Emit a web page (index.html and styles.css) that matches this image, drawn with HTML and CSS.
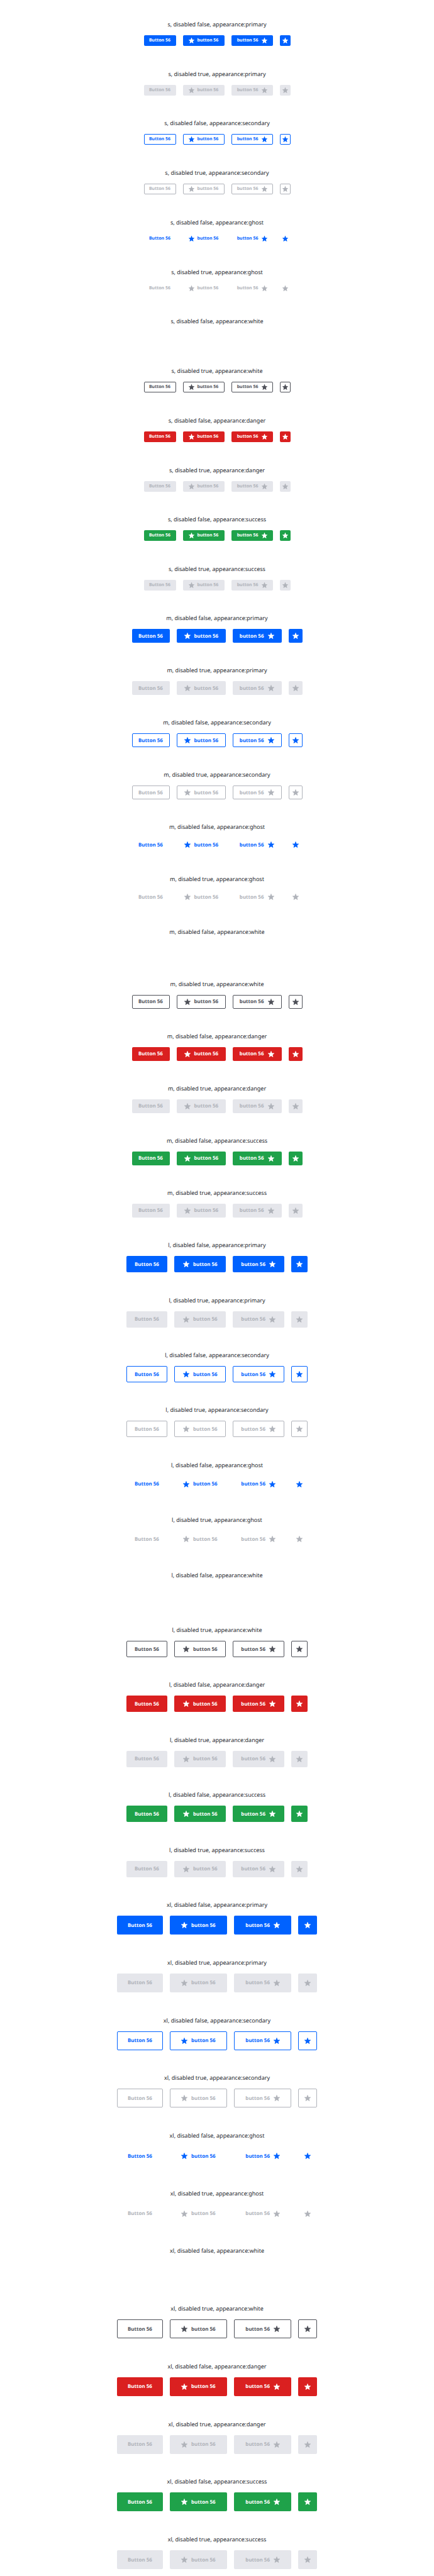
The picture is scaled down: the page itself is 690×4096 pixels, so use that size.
FILE: index.html
```html
<!DOCTYPE html>
<html lang="en">
<head>
<meta charset="utf-8">
<title>Buttons</title>
<link rel="stylesheet" href="styles.css">
</head>
<body>
<main class="page" id="page"></main>
<script src="buttons.js"></script>
</body>
</html>
```

FILE: styles.css
```css
* {
  box-sizing: border-box;
}

body {
  margin: 0;
  background: #fff;
  color: #22252b;
  font-family: "Noto Sans", "Open Sans", sans-serif;
  text-rendering: geometricPrecision;
}

.page {
  display: grid;
  grid-template-rows: 146fr 154fr 162fr 170fr;
  min-height: 100vh;
  padding-top: 5px;
}

.group {
  display: grid;
  grid-auto-rows: 1fr;
}

.variant {
  display: flex;
  flex-direction: column;
  justify-content: flex-end;
  align-items: center;
  padding-bottom: 11px;
}

.title {
  margin: 0 0 11px;
  font-size: 9px;
  font-weight: 400;
  line-height: 13px;
}

.row {
  display: flex;
  gap: 11px;
}

.btn {
  display: flex;
  align-items: center;
  justify-content: center;
  padding: 0;
  border: 1px solid transparent;
  border-radius: 2px;
  font-family: inherit;
  font-weight: 700;
  text-rendering: inherit;
  white-space: nowrap;
}

.star {
  flex: none;
  fill: currentColor;
}

.lead {
  justify-content: flex-start;
}

.trail {
  justify-content: flex-end;
}

/* Sizes */
.s .btn { height: 17px; width: 51px; font-size: 7px; gap: 5px; }
.s .lead, .s .trail { width: 66px; }
.s .lead { padding-left: 8px; }
.s .trail { padding-right: 8px; }
.s .icon { width: 17px; }
.s .star { width: 9px; height: 9px; }

.m .btn { height: 22px; width: 60px; font-size: 8px; gap: 6px; }
.m .lead, .m .trail { width: 78px; }
.m .lead { padding-left: 11px; }
.m .trail { padding-right: 11px; }
.m .icon { width: 22px; }
.m .star { width: 10px; height: 10px; }

.l .btn { height: 26px; width: 65px; font-size: 8px; gap: 6px; }
.l .lead, .l .trail { width: 82px; }
.l .lead { padding-left: 13px; }
.l .trail { padding-right: 13px; }
.l .icon { width: 26px; }
.l .star { width: 10px; height: 10px; }

.xl .btn { height: 30px; width: 73px; font-size: 8px; gap: 6px; }
.xl .lead, .xl .trail { width: 91px; }
.xl .lead { padding-left: 17px; }
.xl .trail { padding-right: 17px; }
.xl .icon { width: 30px; }
.xl .star { width: 10px; height: 10px; }

/* Appearances */
.primary { background: #0062ff; color: #fff; }
.secondary { background: #fff; border-color: #0062ff; color: #0062ff; }
.ghost { background: transparent; color: #0062ff; }
.white { background: #fff; color: #fff; }
.danger { background: #da2020; color: #fff; }
.success { background: #1fa24a; color: #fff; }

.btn:disabled { background: #e5e6eb; color: #b0b3ba; }
.secondary:disabled { background: #fff; border-color: #b0b3ba; }
.ghost:disabled { background: transparent; }
.white:disabled { background: #fff; border-color: #4e5058; color: #4e5058; }
```

FILE: buttons.js
```js
const sizes = ['s', 'm', 'l', 'xl'];
const appearances = ['primary', 'secondary', 'ghost', 'white', 'danger', 'success'];

const star =
  '<svg class="star" viewBox="0 0 18 18" aria-hidden="true">' +
  '<path d="M9 .2c.3 0 .6.2.7.5l2 5.4 5.6.3c.7 0 .9.8.4 1.2l-4.3 3.5 1.5 5.6c.2.7-.5 1.2-1.1.8L9 14.4l-4.8 3.1c-.6.4-1.3-.1-1.1-.8l1.5-5.6L.3 7.6C-.2 7.2 0 6.4.7 6.4l5.6-.3 2-5.4c.1-.3.4-.5.7-.5z"/></svg>';

function variant(size, disabled, appearance) {
  const state = disabled ? 'disabled' : '';
  const button = (kind, content, label = '') =>
    `<button type="button" class="btn ${kind} ${appearance}" ${label} ${state}>${content}</button>`;
  return `
    <section class="variant">
      <h2 class="title">${size}, disabled ${disabled}, appearance:${appearance}</h2>
      <div class="row">
        ${button('text', 'Button 56')}
        ${button('lead', star + '<span>button 56</span>')}
        ${button('trail', '<span>button 56</span>' + star)}
        ${button('icon', star, 'aria-label="Star"')}
      </div>
    </section>`;
}

document.getElementById('page').innerHTML = sizes
  .map(size => `<div class="group ${size}">${appearances
    .map(a => variant(size, false, a) + variant(size, true, a))
    .join('')}</div>`)
  .join('');
```
